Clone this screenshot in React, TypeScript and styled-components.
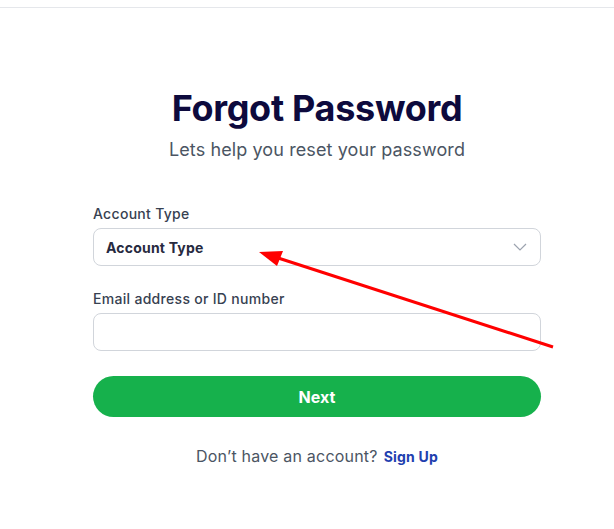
import React from "react";
import styled, { createGlobalStyle } from "styled-components";

const GlobalStyle = createGlobalStyle`
  html, body {
    margin: 0;
    padding: 0;
    background: #ffffff;
    font-family: Inter, "Noto Sans", sans-serif;
  }
`;

const Page = styled.div`
  position: relative;
  width: 614px;
  height: 529px;
  overflow: hidden;
  background: #ffffff;
`;

const TopBar = styled.div`
  height: 7px;
  border-bottom: 1px solid #e5e7eb;
`;

const Main = styled.main`
  display: flex;
  justify-content: center;
  padding: 78px 0 0 20px;
`;

const Card = styled.div`
  width: 448px;
  display: flex;
  flex-direction: column;
`;

const Title = styled.h1`
  margin: 0;
  text-align: center;
  font-size: 36px;
  line-height: 44px;
  font-weight: 700;
  letter-spacing: -0.3px;
  color: #0d0a3d;
`;

const Subtitle = styled.p`
  margin: 8px 0 0;
  text-align: center;
  font-size: 18px;
  line-height: 24px;
  letter-spacing: 0.1px;
  color: #4b5563;
`;

const Form = styled.form`
  margin-top: 44px;
  display: flex;
  flex-direction: column;
`;

const Field = styled.div`
  display: flex;
  flex-direction: column;
  gap: 6px;
  margin-bottom: 25px;
`;

const Label = styled.label`
  font-size: 14px;
  line-height: 16px;
  font-weight: 500;
  letter-spacing: 0.3px;
  color: #374151;
`;

const SelectBox = styled.div`
  height: 38px;
  box-sizing: border-box;
  border: 1px solid #d1d5db;
  border-radius: 8px;
  display: flex;
  align-items: center;
  justify-content: space-between;
  padding: 0 12px;
  font-size: 14px;
  font-weight: 700;
  letter-spacing: 0.2px;
  color: #272a3f;
`;

const TextInput = styled.input`
  height: 38px;
  box-sizing: border-box;
  border: 1px solid #d1d5db;
  border-radius: 8px;
  padding: 0 12px;
  font-size: 14px;
  font-family: inherit;
  outline: none;
`;

const NextButton = styled.button`
  height: 41px;
  border: none;
  border-radius: 999px;
  background: #16b14c;
  color: #ffffff;
  font-family: inherit;
  font-size: 16px;
  font-weight: 700;
`;

const Footer = styled.p`
  margin: 29px 0 0;
  text-align: center;
  font-size: 16px;
  letter-spacing: 0.2px;
  color: #4b5563;
`;

const SignUp = styled.a`
  margin-left: 6px;
  font-size: 14px;
  font-weight: 700;
  color: #1e40af;
  text-decoration: none;
`;

const Annotation = styled.svg`
  position: absolute;
  left: 0;
  top: 0;
  pointer-events: none;
`;

export default function App() {
  return (
    <>
      <GlobalStyle />
      <Page>
        <TopBar />
        <Main>
          <Card>
            <Title>Forgot Password</Title>
            <Subtitle>Lets help you reset your password</Subtitle>
            <Form onSubmit={(e) => e.preventDefault()}>
              <Field>
                <Label>Account Type</Label>
                <SelectBox>
                  <span>Account Type</span>
                  <svg width="16" height="16" viewBox="0 0 16 16" fill="none">
                    <path d="M2 5l6 6 6-6" stroke="#9ca3af" strokeWidth="1.2" />
                  </svg>
                </SelectBox>
              </Field>
              <Field>
                <Label>Email address or ID number</Label>
                <TextInput type="text" />
              </Field>
              <NextButton type="submit">Next</NextButton>
            </Form>
            <Footer>
              Don’t have an account?
              <SignUp href="#">Sign Up</SignUp>
            </Footer>
          </Card>
        </Main>
        <Annotation width="614" height="529" viewBox="0 0 614 529">
          <line x1="553" y1="347" x2="272" y2="256" stroke="#ff0000" strokeWidth="3" />
          <polygon points="259,252 283,251 277,266" fill="#ff0000" />
        </Annotation>
      </Page>
    </>
  );
}
